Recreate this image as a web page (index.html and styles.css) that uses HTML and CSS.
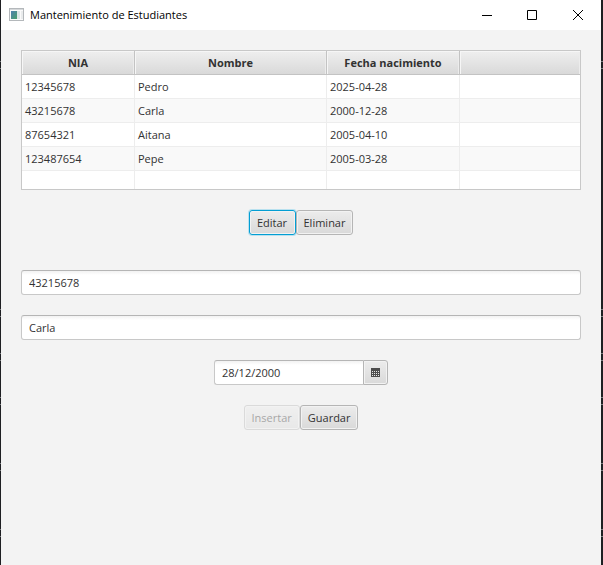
FILE: index.html
```html
<!DOCTYPE html>
<html lang="es">
<head>
<meta charset="utf-8">
<title>Mantenimiento de Estudiantes</title>
<link rel="stylesheet" href="styles.css">
</head>
<body>
<div class="window">
  <header class="titlebar">
    <svg class="app-icon" width="16" height="14" viewBox="0 0 16 14" aria-hidden="true">
      <defs>
        <linearGradient id="pane" x1="0" y1="0" x2="1" y2="1">
          <stop offset="0" stop-color="#4f7fb0"/>
          <stop offset="1" stop-color="#49a06b"/>
        </linearGradient>
      </defs>
      <rect x="0.5" y="0.5" width="14" height="12" fill="#fafafa" stroke="#b4b8bb"/>
      <rect x="1" y="1" width="13" height="1" fill="#d5d8da"/>
      <rect x="2" y="3" width="6" height="8" fill="url(#pane)"/>
      <rect x="8" y="3" width="3" height="8" fill="#dce5e6"/>
      <rect x="12" y="3" width="2" height="8" fill="#e9ebec"/>
    </svg>
    <h1 class="title">Mantenimiento de Estudiantes</h1>
    <div class="window-controls">
      <button type="button" class="control" aria-label="Minimizar"><svg width="11" height="11" viewBox="0 0 11 11"><path d="M1 5.5H11"/></svg></button>
      <button type="button" class="control" aria-label="Maximizar"><svg width="11" height="11" viewBox="0 0 11 11"><path d="M.5 .5H9.5V9.5H.5Z"/></svg></button>
      <button type="button" class="control" aria-label="Cerrar"><svg width="11" height="11" viewBox="0 0 11 11"><path d="M0 0L10 10M10 0L0 10"/></svg></button>
    </div>
  </header>
  <main class="content">
    <div class="table-view">
      <table>
        <colgroup><col class="col-nia"><col class="col-name"><col class="col-date"><col></colgroup>
        <thead>
          <tr><th scope="col">NIA</th><th scope="col">Nombre</th><th scope="col">Fecha nacimiento</th><th></th></tr>
        </thead>
        <tbody>
          <tr><td>12345678</td><td>Pedro</td><td>2025-04-28</td><td></td></tr>
          <tr><td>43215678</td><td>Carla</td><td>2000-12-28</td><td></td></tr>
          <tr><td>87654321</td><td>Aitana</td><td>2005-04-10</td><td></td></tr>
          <tr><td>123487654</td><td>Pepe</td><td>2005-03-28</td><td></td></tr>
          <tr class="filler"><td></td><td></td><td></td><td></td></tr>
        </tbody>
      </table>
    </div>
    <div class="actions table-actions">
      <button type="button" class="button focused">Editar</button>
      <button type="button" class="button">Eliminar</button>
    </div>
    <form class="form">
      <input class="field" type="text" aria-label="NIA" value="43215678">
      <input class="field" type="text" aria-label="Nombre" value="Carla">
      <div class="date-picker">
        <input class="field date-field" type="text" aria-label="Fecha nacimiento" value="28/12/2000">
        <button type="button" class="date-button" aria-label="Abrir calendario">
          <svg width="9" height="9" viewBox="0 0 9 9"><path fill="#4c4c4c" d="M0 0H9V9H0Z"/><path stroke="#e4e4e4" stroke-dasharray="1 1" d="M1 3.5H8M1 5.5H8M1 7.5H8"/></svg>
        </button>
      </div>
      <div class="actions">
        <button type="button" class="button" disabled>Insertar</button>
        <button type="button" class="button">Guardar</button>
      </div>
    </form>
  </main>
</div>
</body>
</html>
```
FILE: styles.css
```css
* { box-sizing: border-box; }

body {
  margin: 0;
  /* faint lines of the desktop behind the window */
  background:
    linear-gradient(#77797c, #77797c) 0 61px / 100% 1px no-repeat,
    linear-gradient(#77797c, #77797c) 0 68px / 100% 1px no-repeat,
    linear-gradient(#77797c, #77797c) 0 309px / 100% 1px no-repeat,
    linear-gradient(#77797c, #77797c) 0 316px / 100% 1px no-repeat,
    linear-gradient(#77797c, #77797c) 0 353px / 100% 1px no-repeat,
    linear-gradient(#77797c, #77797c) 0 360px / 100% 1px no-repeat,
    linear-gradient(#77797c, #77797c) 0 397px / 100% 1px no-repeat,
    linear-gradient(#77797c, #77797c) 0 404px / 100% 1px no-repeat,
    linear-gradient(#77797c, #77797c) 0 463px / 100% 1px no-repeat,
    linear-gradient(#77797c, #77797c) 0 470px / 100% 1px no-repeat,
    linear-gradient(#77797c, #77797c) 0 529px / 100% 1px no-repeat,
    linear-gradient(#77797c, #77797c) 0 536px / 100% 1px no-repeat,
    #1e1f22;
  color: #323232;
  font: 11px/16px "Segoe UI", "Open Sans", "Noto Sans", sans-serif;
}

button, input { font: inherit; color: inherit; margin: 0; }

.window {
  min-height: 100vh;
  margin: 0 2px 0 1px;
  background: #f3f3f3;
}

.titlebar {
  display: flex;
  align-items: center;
  height: 30px;
  padding-left: 8px;
  background: #fff;
  color: #000;
}

.title { margin: 0 0 0 5px; font-size: 11px; font-weight: 400; }

.window-controls { display: flex; margin-left: auto; }

.control {
  display: grid;
  place-items: center;
  width: 46px;
  height: 30px;
  padding: 0;
  border: 0;
  background: none;
}

.control path { fill: none; stroke: #000; }

.content { padding: 20px; }

.table-view { border: 1px solid #c8c8c8; background: #fff; }

table { width: 100%; table-layout: fixed; border-collapse: separate; border-spacing: 0; }

.col-nia { width: 113px; }
.col-name { width: 192px; }
.col-date { width: 133px; }

th {
  height: 24px;
  padding: 0;
  border: solid #c3c3c3;
  border-width: 0 1px 1px 0;
  background: linear-gradient(#efefef, #d9d9d9);
  box-shadow: inset 1px 1px #f6f6f6, inset -1px 0 #ececec;
  font-weight: 700;
}

td {
  height: 24px;
  padding: 0 3px;
  border: solid #ededed;
  border-width: 0 1px 1px 0;
}

th:last-child, td:last-child { border-right: 0; }
tbody tr:nth-child(even) { background: #f9f9f9; }
.filler td { height: 18px; border-bottom: 0; }

.actions { display: flex; justify-content: center; }
.table-actions { margin: 20px 0 35px; }

.button {
  min-width: 47px;
  height: 25px;
  padding: 0 7px;
  border: 1px solid #b5b5b5;
  border-radius: 3px;
  background: linear-gradient(#ececec, #d9d9d9);
  box-shadow: inset 0 0 0 1px #f2f2f2;
}

.focused { border-color: #039ed3; box-shadow: 0 0 0 1px #b9e1ef, inset 0 0 0 1px #f2f2f2; }
.button:disabled { opacity: 0.4; }

.form { display: flex; flex-direction: column; gap: 20px; }

.field {
  width: 100%;
  height: 25px;
  padding: 0 7px;
  border: 1px solid #c8c8c8;
  border-top-color: #b5b5b5;
  border-radius: 3px;
  background: linear-gradient(#f2f2f2, #fff 4px);
}

.date-picker { display: flex; align-self: center; }
.date-field { width: 149px; border-right: 0; border-radius: 3px 0 0 3px; }

.date-button {
  display: grid;
  place-items: center;
  width: 25px;
  height: 25px;
  padding: 0;
  border: 1px solid #b5b5b5;
  border-radius: 0 3px 3px 0;
  background: linear-gradient(#ececec, #d9d9d9);
  box-shadow: inset 0 0 0 1px #f2f2f2;
}
```
